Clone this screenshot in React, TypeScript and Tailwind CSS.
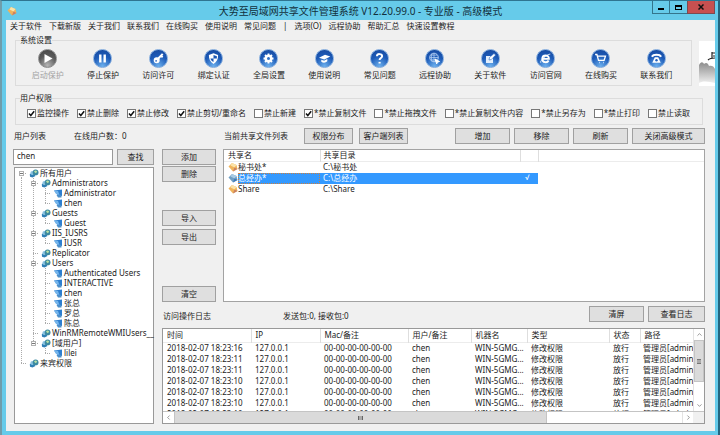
import React from 'react'
import { ChevronLeft, ChevronRight, ChevronUp, ChevronDown } from 'lucide-react'

const toolbar = [
  { label: '启动保护', icon: 'play', disabled: true },
  { label: '停止保护', icon: 'pause' },
  { label: '访问许可', icon: 'key' },
  { label: '绑定认证', icon: 'shield' },
  { label: '全局设置', icon: 'gear' },
  { label: '使用说明', icon: 'cap' },
  { label: '常见问题', icon: 'question' },
  { label: '远程协助', icon: 'remote' },
  { label: '关于软件', icon: 'note' },
  { label: '访问官网', icon: 'browser' },
  { label: '在线购买', icon: 'cart' },
  { label: '联系我们', icon: 'phone' },
]

const menuLeft = ['关于软件', '下载新版', '关于我们', '联系我们', '在线购买', '使用说明', '常见问题']
const menuRight = ['选项(O)', '远程协助', '帮助汇总', '快速设置教程']

const permissions = [
  { label: '监控操作', on: true },
  { label: '禁止删除', on: true },
  { label: '禁止修改', on: true },
  { label: '禁止剪切/重命名', on: true },
  { label: '禁止新建', on: false },
  { label: '*禁止复制文件', on: true },
  { label: '*禁止拖拽文件', on: false },
  { label: '*禁止复制文件内容', on: false },
  { label: '*禁止另存为', on: false },
  { label: '*禁止打印', on: false },
  { label: '禁止读取', on: false },
]

// guides: one letter per tree column. v = line through, t = branch, l = last branch, s = start
const tree = [
  { guides: 's', name: '所有用户', group: true, open: true },
  { guides: 'vt', name: 'Administrators', group: true, open: true },
  { guides: 'vvt', name: 'Administrator' },
  { guides: 'vvl', name: 'chen' },
  { guides: 'vt', name: 'Guests', group: true, open: true },
  { guides: 'vvl', name: 'Guest' },
  { guides: 'vt', name: 'IIS_IUSRS', group: true, open: true },
  { guides: 'vvl', name: 'IUSR' },
  { guides: 'vt', name: 'Replicator', group: true },
  { guides: 'vt', name: 'Users', group: true, open: true },
  { guides: 'vvt', name: 'Authenticated Users' },
  { guides: 'vvt', name: 'INTERACTIVE' },
  { guides: 'vvt', name: 'chen' },
  { guides: 'vvt', name: '张总' },
  { guides: 'vvt', name: '罗总' },
  { guides: 'vvl', name: '陈总' },
  { guides: 'vt', name: 'WinRMRemoteWMIUsers__', group: true },
  { guides: 'vl', name: '[域用户]', group: true, open: true },
  { guides: 'v l', name: 'lilei' },
  { guides: 'l', name: '来宾权限', group: true },
]

const shares = [
  { name: '秘书处*', path: 'C:\\秘书处' },
  { name: '总经办*', path: 'C:\\总经办', selected: true },
  { name: 'Share', path: 'C:\\Share' },
]

const logTimes = ['18:23:16', '18:23:11', '18:23:11', '18:23:10', '18:23:10', '18:23:10', '18:23:10']
const logHeads = ['时间', 'IP', 'Mac/备注', '用户/备注', '机器名', '类型', '状态', '路径']

function Glyph({ name }: { name: string }) {
  switch (name) {
    case 'play':
      return <path d="M7 5.5 15 10 7 14.5Z" fill="#fff" stroke="none" />
    case 'pause':
      return <path d="M7.8 6v8M12.2 6v8" strokeWidth="2.4" />
    case 'key':
      return (
        <>
          <circle cx="8.2" cy="11.8" r="2" fill="#fff" strokeWidth="2" />
          <circle cx="7.6" cy="12.4" r=".8" fill="#1b57b5" stroke="none" />
          <path d="m9.8 10 4.4-4.6M12.2 7.2l2 1.4" strokeWidth="2" />
        </>
      )
    case 'shield':
      return (
        <>
          <path d="M10 4.8 14.6 6.6c.2 4-1.4 7-4.6 8.8-3.2-1.8-4.8-4.8-4.6-8.8Z" fill="#fff" stroke="none" />
          <path d="M10 6.6V10h3.4c-.1-1 0-1.7 0-2.3ZM10 10v3.6C8.2 12.5 7.3 11.5 6.9 10Z" fill="#1b57b5" stroke="none" />
        </>
      )
    case 'gear':
      return (
        <>
          <circle cx="10" cy="10" r="2.7" strokeWidth="2.4" />
          <path d="M10 5v1.5M10 13.5V15M5 10h1.5M13.5 10H15M6.5 6.5l1 1M12.5 12.5l1 1M6.5 13.5l1-1M12.5 7.5l1-1" strokeWidth="1.8" />
        </>
      )
    case 'cap':
      return (
        <>
          <path d="M4.5 9.2 10.5 6.2 15.8 8 9.8 11Z" fill="#fff" stroke="none" />
          <path d="M6.8 11.2v2c1.8 1.4 4.4 1.2 6-.4v-2.4l-3.2 1.8Z" fill="#fff" stroke="none" />
        </>
      )
    case 'question':
      return (
        <>
          <path d="M7.4 7.8c.2-3 5.2-2.8 5.2 0 0 1.7-2.5 1.8-2.5 3.6" strokeWidth="2" />
          <path d="M10.1 13.4v1.6" strokeWidth="2.1" />
        </>
      )
    case 'remote':
      return (
        <>
          <circle cx="9.5" cy="9" r="4.3" strokeWidth=".9" stroke="#bcd6f7" />
          <path d="M5.2 9h8.6M9.5 4.7v8.6M6.2 6.6h6.6M6.2 11.4h5M7.6 5.4c-1 2.4-1 4.8 0 7.2" strokeWidth=".7" stroke="#bcd6f7" />
          <path d="m10.5 10.5 4.5 2.5-2 .6-.8 1.8Z" fill="#fff" />
        </>
      )
    case 'note':
      return (
        <>
          <path d="M5.5 7.5h7v7h-7Z" fill="#e4effc" stroke="none" />
          <path d="m8.5 11.5.5-2.5 4.5-4 1.6 1.6-4.3 4.4Z" fill="#fff" stroke="#2c69c0" strokeWidth=".6" />
        </>
      )
    case 'browser':
      return (
        <>
          <path d="M6.8 10.4h6.6c.1-4.6-6.6-4.6-6.6 0 0 3.8 5 4.3 6.3 1.6" strokeWidth="1.9" />
          <path d="M5.2 14.2c-1.2-1.6 6.4-8.8 9.6-8.6" strokeWidth=".8" />
        </>
      )
    case 'cart':
      return (
        <>
          <path d="M4.6 6h1.8l1.6 5.8h5.6L15 7.6H7" strokeWidth="1.3" />
          <path d="M8.5 14h.6M12.5 14h.6" strokeWidth="1.7" />
        </>
      )
    default:
      return (
        <>
          <path d="M5.4 8.2c1.4-2.6 7.8-2.6 9.2 0" strokeWidth="2" />
          <path d="M8.3 8.8h3.4l2.5 5.4H5.8Z" fill="#fff" stroke="none" />
          <circle cx="10" cy="11.7" r="1.2" fill="#2360bb" stroke="none" />
        </>
      )
  }
}

function ToolButton({ label, icon, disabled }: { label: string; icon: string; disabled?: boolean }) {
  return (
    <button type="button" disabled={disabled} className="flex flex-col items-center gap-0.5 whitespace-nowrap disabled:text-[#a3a3a3]">
      <span
        className={
          disabled
            ? 'size-[19px] rounded-full border border-[#8a8a8a] bg-[radial-gradient(circle_at_50%_90%,#b5b5b5,#5a5a5a_55%,#444)]'
            : 'size-[19px] rounded-full border border-[#7fa9dc] bg-[radial-gradient(circle_at_50%_95%,#6cb0ee,#1d5bb8_55%,#17479c)]'
        }
      >
        <svg viewBox="1.5 1.5 17 17" className="size-full" fill="none" stroke="#fff">
          <Glyph name={icon} />
        </svg>
      </span>
      <span className="leading-[10px]">{label}</span>
    </button>
  )
}

function WinButton({ children, className = '' }: { children: React.ReactNode; className?: string }) {
  return (
    <button type="button" className={`h-4 shrink-0 border border-[#a0a0a0] bg-[#dfdfdf] leading-[10px] whitespace-nowrap ${className}`}>
      {children}
    </button>
  )
}

function TagIcon({ selected }: { selected?: boolean }) {
  return (
    <svg viewBox="0 0 10 10" className="size-[10px] shrink-0">
      <path d="M.5 4.5 4 1l4.5 2L9.5 7 5 9.5Z" fill={selected ? '#6f9fc4' : '#f0b35a'} />
      <path d="M4 1l4.5 2-2 2.5-4-2Z" fill={selected ? '#a8cbe4' : '#fbe3a8'} />
      <path d="M6.5 5.5 9.5 7 5 9.5Z" fill={selected ? '#3f78b8' : '#c98064'} />
    </svg>
  )
}

function UserIcon({ group }: { group?: boolean }) {
  if (group) {
    return (
      <svg viewBox="0 0 10 9" className="h-[9px] w-[10px] shrink-0">
        <path d="M.8 5 4 3.5 6.5 7 3.5 8.6 1 7.8Z" fill="#2f7fb5" />
        <circle cx="3.3" cy="4" r="1.9" fill="#8cc3e2" />
        <circle cx="6.6" cy="3.4" r="2.9" fill="#3d8aa0" />
        <path d="M5 2.5c1-1.5 2.8-1.2 3.2.5l-1.7 1.2Z" fill="#b4dfa6" />
      </svg>
    )
  }
  return (
    <svg viewBox="0 0 10 9" className="h-[9px] w-[10px] shrink-0">
      <path d="M1 1.5 9 .5V7L5 6.5Z" fill="#2d7fd0" />
      <path d="M1 1.5 5 2l1.5 4-3.5-1Z" fill="#74b4ea" />
      <path d="M3.5 6h5v2.6H5Z" fill="#4c8fc9" />
    </svg>
  )
}

function Guide({ kind, open }: { kind: string; open?: boolean }) {
  return (
    <svg viewBox="0 0 12 10" className="h-[10px] w-3 shrink-0" fill="none" stroke="#aaa" strokeDasharray="1 1">
      {(kind === 'v' || kind === 't') && <path d="M6.5 0v10" />}
      {kind === 'l' && <path d="M6.5 0v5" />}
      {kind === 's' && <path d="M6.5 5v5" />}
      {'tls'.includes(kind) && <path d="M6 5.5h6" />}
      {open && (
        <g strokeDasharray="none">
          <rect x="4.5" y="3.5" width="4" height="4" fill="#fff" stroke="#b0b0b0" />
          <path d="M5 5.5h3" stroke="#777" />
        </g>
      )}
    </svg>
  )
}

function UserPanel() {
  return (
    <section className="flex flex-col">
      <div className="flex h-4 items-center pl-px">
        <span className="w-[60px]">用户列表</span>
        <span>在线用户数：0</span>
      </div>
      <div className="mt-[5px] flex gap-1">
        <input
          type="text"
          aria-label="查找用户"
          defaultValue="chen"
          className="h-4 min-w-0 flex-1 border border-[#999] bg-white px-[3px] pb-1 text-[8px] leading-[10px] outline-none"
        />
        <WinButton className="w-[37px]">查找</WinButton>
      </div>
      <ul className="mt-0.5 ml-px flex-1 border border-[#999] bg-white">
        {tree.map((row, i) => (
          <li key={i} className="flex h-[10px] items-center">
            {row.guides.split('').map((g, j) => (
              <Guide key={j} kind={g} open={row.open && j === row.guides.length - 1} />
            ))}
            <span className="ml-0.5 flex items-center gap-px whitespace-nowrap">
              <UserIcon group={row.group} />
              {row.name}
            </span>
          </li>
        ))}
      </ul>
    </section>
  )
}

function ShareList() {
  return (
    <div className="min-w-0 flex-1 border border-[#a3a3a3] bg-white">
      <table className="w-full table-fixed border-collapse text-left">
        <colgroup>
          <col className="w-[96px]" />
          <col className="w-[200px]" />
          <col className="w-[18px]" />
          <col />
        </colgroup>
        <thead>
          <tr className="h-[11px] border-b border-[#ececec]">
            <th className="border-r border-[#dedede] p-0 pl-1 font-normal">共享名</th>
            <th className="border-r border-[#dedede] p-0 pl-[3px] font-normal">共享目录</th>
            <th className="border-r border-[#dedede] p-0" />
            <th className="p-0" />
          </tr>
        </thead>
        <tbody>
          {shares.map((s) => (
            <tr key={s.name} className={s.selected ? 'h-[11px] text-white' : 'h-[11px]'}>
              <td className="p-0 pl-1">
                <span className="flex items-center">
                  <TagIcon selected={s.selected} />
                  <span className={s.selected ? 'h-[11px] flex-1 bg-[#3399ff] outline-1 -outline-offset-1 outline-dotted outline-[#cc8040]' : 'h-[11px] flex-1'}>{s.name}</span>
                </span>
              </td>
              <td className={s.selected ? 'bg-[#3399ff] p-0 pl-[3px]' : 'p-0 pl-[3px]'}>{s.path}</td>
              <td className={s.selected ? 'bg-[#3399ff] p-0 pl-[5px] font-[Roboto]' : 'p-0'}>{s.selected && '√'}</td>
              <td className="p-0" />
            </tr>
          ))}
        </tbody>
      </table>
    </div>
  )
}

function LogTable() {
  return (
    <div className="mt-1.5 flex h-24 flex-col border border-[#999] bg-white">
      <div className="flex min-h-0 flex-1">
        <div className="min-w-0 flex-1 overflow-hidden">
          <table className="w-full table-fixed border-collapse text-left whitespace-nowrap">
            <colgroup>
              <col className="w-[88px]" />
              <col className="w-[69px]" />
              <col className="w-[88px]" />
              <col className="w-[63px]" />
              <col className="w-[56px]" />
              <col className="w-[82px]" />
              <col className="w-[31px]" />
              <col />
            </colgroup>
            <thead>
              <tr className="h-[13px] border-b border-[#ececec]">
                {logHeads.map((h) => (
                  <th key={h} className="border-r border-[#dedede] p-0 pl-1 font-normal last:border-r-0">{h}</th>
                ))}
              </tr>
            </thead>
            <tbody>
              {logTimes.map((t, i) => (
                <tr key={i} className="h-[11px]">
                  <td className="p-0 pl-1">2018-02-07 {t}</td>
                  <td className="p-0 pl-1">127.0.0.1</td>
                  <td className="p-0 pl-1">00-00-00-00-00-00</td>
                  <td className="p-0 pl-1">chen</td>
                  <td className="p-0 pl-1">WIN-5GMG...</td>
                  <td className="p-0 pl-1">修改权限</td>
                  <td className="p-0 pl-1">放行</td>
                  <td className="p-0 pl-[3px]">管理员[admin</td>
                </tr>
              ))}
            </tbody>
          </table>
        </div>
        <div className="flex w-[11px] flex-col border-l border-[#e3e3e3]">
          <button type="button" aria-label="向上滚动" className="grid h-[11px] place-items-center">
            <ChevronUp className="size-[7px]" color="#555" />
          </button>
          <div className="grid h-[42px] place-items-center border border-[#c4c4c4] bg-[#dadada]">
            <span className="h-[5px] w-1 border-y border-[#777] bg-[#aaa]" />
          </div>
          <button type="button" aria-label="向下滚动" className="mt-auto grid h-[11px] place-items-center">
            <ChevronDown className="size-[7px]" color="#555" />
          </button>
        </div>
      </div>
      <div className="flex h-[12px] border-t border-[#c4c4c4]">
        <button type="button" aria-label="向左滚动" className="grid w-[11px] place-items-center">
          <ChevronLeft className="size-[7px]" color="#555" />
        </button>
        <div className="grid w-[69%] place-items-center border-x border-[#c4c4c4] bg-[#dadada]">
          <span className="h-1 w-[5px] border-x border-[#666] bg-[#aaa]" />
        </div>
        <button type="button" aria-label="向右滚动" className="ml-auto grid w-[11px] place-items-center border-l border-[#e3e3e3]">
          <ChevronRight className="size-[7px]" color="#555" />
        </button>
        <span className="w-[11px] bg-[#f0f0f0]" />
      </div>
    </div>
  )
}

export default function App() {
  return (
    <div className="flex min-h-screen flex-col border-t border-r-2 border-l-2 border-t-[#2f7591] border-r-[#236680] border-l-[#6f9dab] bg-[#66cbea] pr-[3px] pb-1 pl-1 font-['Noto_Sans','Noto_Sans_CJK_SC',sans-serif] text-[8px] leading-[10px] text-[#1c1c1c]">
      <header className="grid h-[19px] grid-cols-[1fr_auto_1fr] items-center">
        <span className="pl-px">
          <TagIcon />
        </span>
        <h1 className="text-[10px] leading-[14px] whitespace-nowrap text-[#12303c]">大势至局域网共享文件管理系统 V12.20.99.0 - 专业版 - 高级模式</h1>
        <div className="flex h-[13px] justify-end self-start">
          <button type="button" aria-label="最小化" className="flex w-[18px] items-end justify-center border border-t-0 border-[#34758c] pb-[3px]">
            <span className="h-0.5 w-1.5 bg-black" />
          </button>
          <button type="button" aria-label="最大化" className="grid w-[17px] place-items-center border-b border-[#34758c]">
            <span className="h-[5px] w-[7px] border border-t-2 border-black" />
          </button>
          <button type="button" aria-label="关闭" className="grid w-[28px] place-items-center border border-t-0 border-[#7d4a50] bg-[#c75050]">
            <svg viewBox="0 0 6 6" className="size-1.5" stroke="#111" strokeWidth="1.5">
              <path d="m.5.5 5 5M5.5.5l-5 5" />
            </svg>
          </button>
        </div>
      </header>

      <main className="flex flex-1 flex-col bg-[#f0f0f0] pb-[7px]">
        <nav className="flex h-[12px] items-center gap-[7px] pl-1 whitespace-nowrap">
          {menuLeft.map((m) => (
            <a key={m} href="#">{m}</a>
          ))}
          <span>|</span>
          {menuRight.map((m) => (
            <a key={m} href="#">{m}</a>
          ))}
        </nav>

        <div className="mt-[3px] flex pl-[9px]">
          <fieldset className="min-w-0 flex-1 border border-[#dcdcdc] pt-1 pr-[7px] pb-1 pl-1">
            <legend className="leading-[10px]">系统设置</legend>
            <div className="grid grid-cols-12">
              {toolbar.map((t) => (
                <ToolButton key={t.label} {...t} />
              ))}
            </div>
          </fieldset>
          <svg viewBox="0 0 16 45" className="mt-1.5 ml-[7px] h-[45px] w-4">
            <defs>
              <linearGradient id="mist" x1="0" y1="0" x2="0" y2="1">
                <stop offset="0" stopColor="#8d8d8d" />
                <stop offset="1" stopColor="#eee" />
              </linearGradient>
            </defs>
            <path d="M0 0h16v45H0Z" fill="#fff" />
            <path d="M0 24c2-4 4-3 5-1 2-2 4-1 5 2 2-1 5 0 6 3v14c-6-1-10-3-16 0Z" fill="url(#mist)" />
            <path d="M9 19c2-2 5-2 7-2M13 11v7M13 12h3M14 15h2" stroke="#222" fill="none" strokeWidth="1.2" />
          </svg>
        </div>

        <fieldset className="mt-[7px] mr-3 ml-[9px] min-w-0 border border-[#dcdcdc] pt-[5px] pb-1.5 pl-1">
          <legend className="leading-[10px]">用户权限</legend>
          <div className="flex gap-2 pl-[7px] whitespace-nowrap">
            {permissions.map((p) => (
              <label key={p.label} className="flex items-center gap-px">
                <span className="relative grid size-[9px]">
                  <input type="checkbox" defaultChecked={p.on} className="peer size-[9px] appearance-none border border-[#777] bg-white" />
                  <svg viewBox="0 0 9 9" className="pointer-events-none absolute inset-0 hidden size-[9px] peer-checked:block" fill="none" stroke="#111" strokeWidth="1.5">
                    <path d="m2 4.5 1.8 2L7.2 2.3" />
                  </svg>
                </span>
                {p.label}
              </label>
            ))}
          </div>
        </fieldset>

        <div className="mt-[3px] grid flex-1 grid-cols-[141px_1fr] gap-2 pr-[10px] pl-[7px]">
          <UserPanel />
          <section className="flex min-w-0 flex-col">
            <div className="flex items-center pl-[62px]">
              <span className="w-20">当前共享文件列表</span>
              <WinButton className="w-[49px]">权限分布</WinButton>
              <WinButton className="ml-1.5 w-[49px]">客户端列表</WinButton>
              <div className="ml-auto flex gap-1">
                <WinButton className="w-[55px]">增加</WinButton>
                <WinButton className="w-[55px]">移除</WinButton>
                <WinButton className="w-[55px]">刷新</WinButton>
                <WinButton className="w-[73px]">关闭高级模式</WinButton>
              </div>
            </div>

            <div className="mt-[5px] flex min-h-[153px] flex-1 gap-[7px]">
              <div className="flex w-[54px] flex-col">
                <WinButton>添加</WinButton>
                <WinButton className="mt-px">删除</WinButton>
                <WinButton className="mt-7">导入</WinButton>
                <WinButton className="mt-[3px]">导出</WinButton>
                <WinButton className="mt-auto">清空</WinButton>
              </div>
              <ShareList />
            </div>

            <div className="mt-1 flex items-center gap-1">
              <span className="w-[117px] pt-1 pl-px">访问操作日志</span>
              <span className="pt-1">发送包:0, 接收包:0</span>
              <WinButton className="ml-auto w-[55px]">清屏</WinButton>
              <WinButton className="w-[57px]">查看日志</WinButton>
            </div>

            <LogTable />
          </section>
        </div>
      </main>
    </div>
  )
}
